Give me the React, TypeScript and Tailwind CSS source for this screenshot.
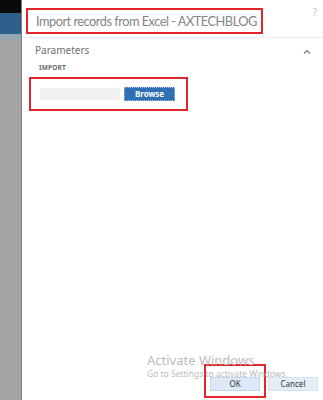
const App = () => {
  return (
    <div className="relative flex h-[400px] w-[323px] overflow-hidden bg-white font-['Noto_Sans',sans-serif]">
      {/* page behind the dialog */}
      <div className="flex w-[22px] flex-col border-r border-[#7d7d7d]">
        <div className="h-[13px] bg-[#0a0a0a]" />
        <div className="h-[21px] bg-[#2c5f8b]" />
        <div className="h-[5px] bg-[#93a5b6]" />
        <div className="flex-1 bg-[#a4a4a4]" />
      </div>

      {/* dialog */}
      <div className="flex flex-1 flex-col">
        <div className="flex items-start justify-between border-b border-[#ececec] pb-[3px] pl-[4px] pr-[6px] pt-[8px]">
          <div className="flex h-[26px] w-[237px] items-center border-2 border-[#e0262b] pl-[8px]">
            <span className="whitespace-nowrap font-['Lato',sans-serif] text-[12.8px] leading-none tracking-[-0.5px] text-[#858585]">
              Import records from Excel - AXTECHBLOG
            </span>
          </div>
          <span className="mt-[-3px] text-[10px] text-[#c4c4c4]">?</span>
        </div>

        <div className="flex items-center justify-between pl-[13px] pr-[12px] pt-[5px]">
          <span className="text-[10px] text-[#707070]">Parameters</span>
          <svg width="8" height="5" viewBox="0 0 8 5" className="mt-[2px]">
            <path d="M1 4.5 L4 1.5 L7 4.5" fill="none" stroke="#7a7a7a" strokeWidth="1.2" />
          </svg>
        </div>

        <div className="pl-[17px] pt-[5px] text-[6.5px] font-bold tracking-wide text-[#6a6a6a]">IMPORT</div>

        <div className="ml-[7px] mt-[4px] flex h-[34px] w-[159px] items-center gap-[4px] border-2 border-[#e0262b] pl-[9px]">
          <div className="h-[12px] w-[80px] bg-[#f1f1f1]" />
          <button className="h-[14px] w-[51px] border border-dotted border-[#a9c6e4] bg-[#2f6fb3] text-[8px] font-bold leading-none text-white">
            Browse
          </button>
        </div>

        <div className="flex-1" />

        <div className="flex justify-end gap-[2px] pb-[2px] pr-[5px]">
          <div className="border-2 border-[#e0262b] px-[4px] py-[3px]">
            <button className="h-[14px] w-[50px] border border-[#c3d6ea] bg-[#dde9f6] text-[8px] leading-none text-[#333]">
              OK
            </button>
          </div>
          <div className="py-[5px]">
            <button className="h-[14px] w-[50px] border border-[#d3e1f0] bg-[#e5eef8] text-[8px] leading-none text-[#333]">
              Cancel
            </button>
          </div>
        </div>
      </div>

      {/* windows activation watermark */}
      <div className="pointer-events-none absolute left-[147px] top-[351px] text-[#bcbcbc]">
        <div className="text-[13px] leading-[18px]">Activate Windows</div>
        <div className="text-[8.5px] leading-[10px]">Go to Settings to activate Windows.</div>
      </div>
    </div>
  );
};

export default App;
